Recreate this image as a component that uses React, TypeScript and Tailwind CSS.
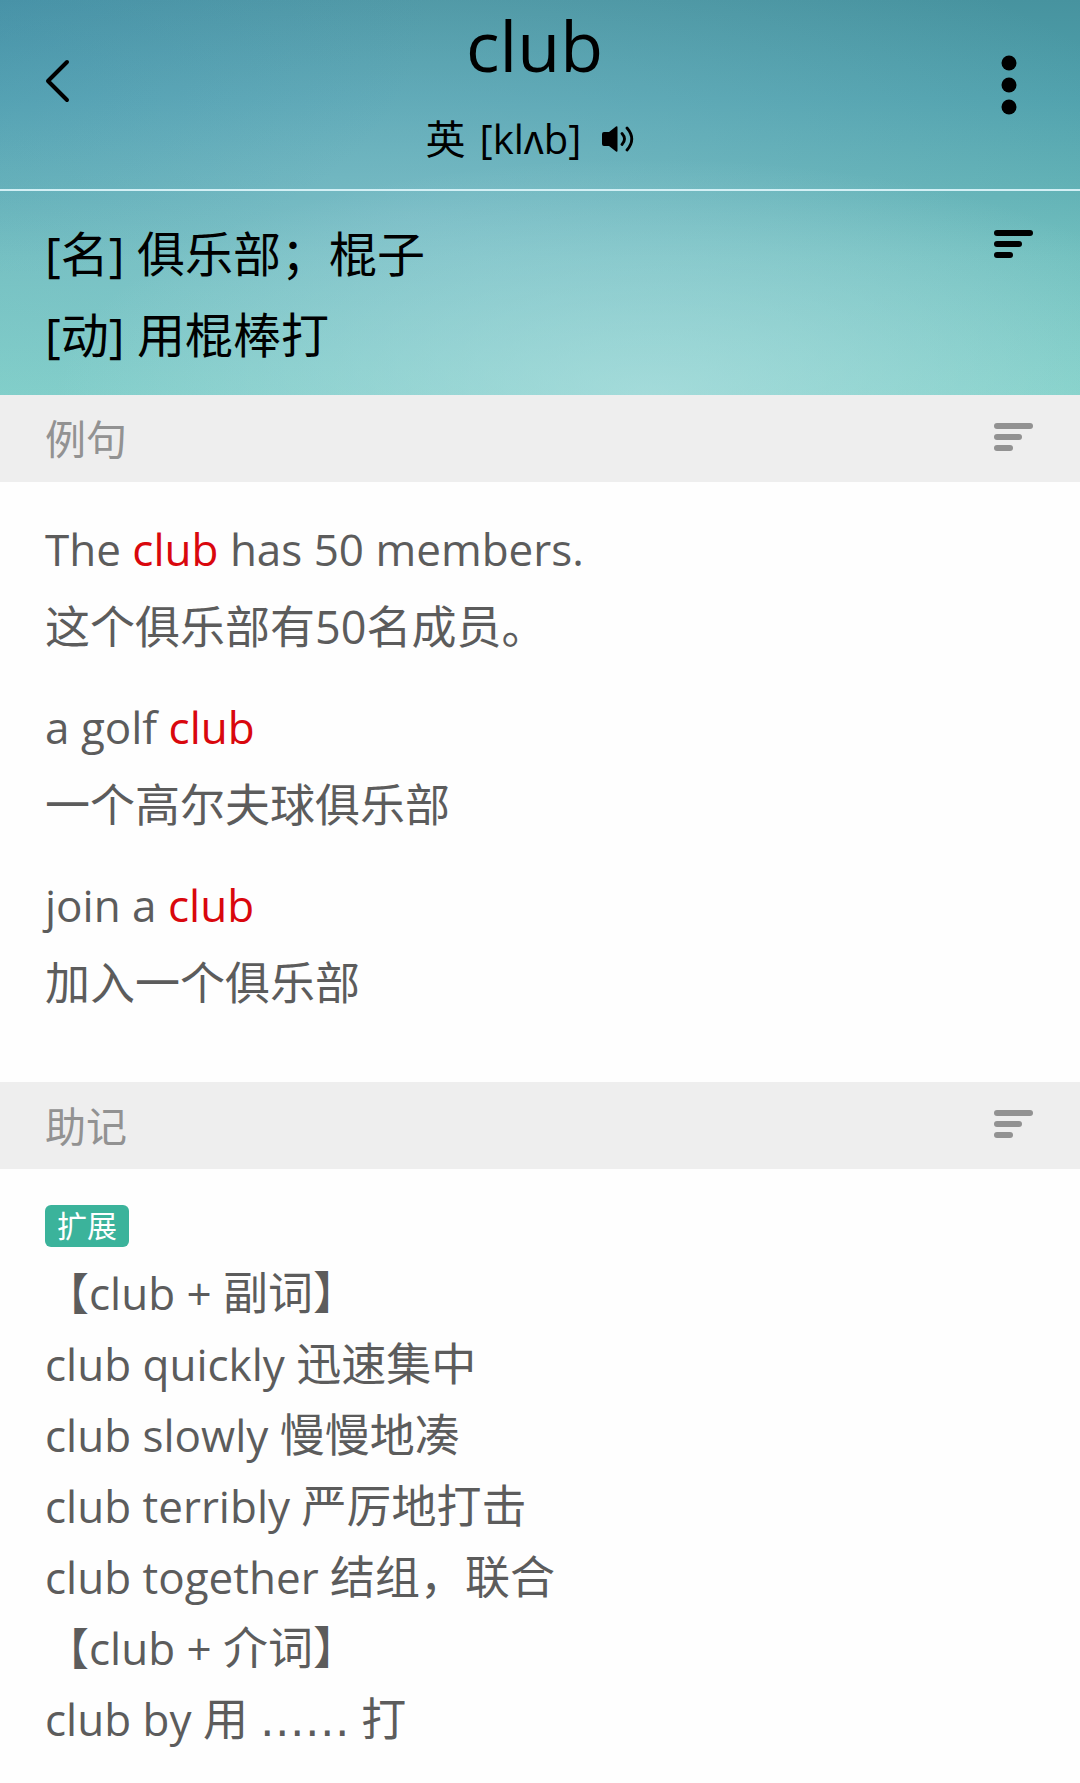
import { clsx } from "clsx";

interface Example {
  before: string;
  word: string;
  after: string;
  translation: string;
}

interface Note {
  phrase: string;
  meaning: string;
  // Placeholder dots come between the meaning and this part
  rest?: string;
}

const definitions = ["[名] 俱乐部；棍子", "[动] 用棍棒打"];

const examples: Example[] = [
  { before: "The ", word: "club", after: " has 50 members.", translation: "这个俱乐部有50名成员。" },
  { before: "a golf ", word: "club", after: "", translation: "一个高尔夫球俱乐部" },
  { before: "join a ", word: "club", after: "", translation: "加入一个俱乐部" },
];

const notes: Note[] = [
  { phrase: "【club + ", meaning: "副词】" },
  { phrase: "club quickly ", meaning: "迅速集中" },
  { phrase: "club slowly ", meaning: "慢慢地凑" },
  { phrase: "club terribly ", meaning: "严厉地打击" },
  { phrase: "club together ", meaning: "结组，联合" },
  { phrase: "【club + ", meaning: "介词】" },
  { phrase: "club by ", meaning: "用 ", rest: " 打" },
];

function MenuButton({ label, className }: { label: string; className?: string }) {
  return (
    <button aria-label={label} className={clsx("shrink-0", className)}>
      <svg width="40" height="30" viewBox="0 0 40 30" fill="currentColor">
        <rect x="0" y="1" width="39" height="6" rx="3" />
        <rect x="0" y="12" width="28" height="6" rx="3" />
        <rect x="0" y="23" width="19" height="6" rx="3" />
      </svg>
    </button>
  );
}

function SectionHeader({ title }: { title: string }) {
  return (
    <div className="flex h-[87px] items-center justify-between bg-[#eeeeee] pl-[45px] pr-[46px] text-[#929292]">
      <h2 className="text-[41px] leading-[60px]">{title}</h2>
      <MenuButton label={title} className="pb-1" />
    </div>
  );
}

export default function App() {
  return (
    <div className="min-h-screen bg-[#fefefe] font-['Open_Sans','Noto_Sans_CJK_SC',sans-serif] text-[#5c5c5c]">
      <div className="bg-[radial-gradient(ellipse_55%_60%_at_60%_100%,rgba(185,228,228,0.6),rgba(185,228,228,0)),radial-gradient(ellipse_40%_70%_at_0%_0%,rgba(60,135,180,0.25),rgba(60,135,180,0)),radial-gradient(ellipse_75%_80%_at_38%_55%,rgba(145,195,215,0.45),rgba(145,195,215,0)),linear-gradient(to_bottom,#47939f,#4fa1ac_25%,#5eb0b3_47%,#6fc0bd_65%,#80d0c8)] text-black">
        <header className="flex h-[191px] justify-between border-b-2 border-[#d3f0f5] pl-[45px] pr-[46px]">
          <button aria-label="返回" className="mt-[58px] flex h-[46px] w-[48px]">
            <svg width="26" height="46" viewBox="0 0 26 46" fill="none" stroke="currentColor" strokeWidth="4" strokeLinecap="round" strokeLinejoin="round">
              <path d="M22 4 3 23 22 42" />
            </svg>
          </button>

          <div className="flex flex-col items-center">
            <h1 className="text-[70px] leading-[90px]">club</h1>
            <div className="flex items-center text-[40px] leading-[98px]">
              <span>英</span>
              <span className="pl-[14px]">[klʌb]</span>
              <button aria-label="发音" className="pl-5 pr-2">
                <svg width="34" height="28" viewBox="0 0 34 28">
                  <path d="M3 7h5L15 1.5q1.500-1 1.500 1v23q0 2-1.500 1L8 21H3q-2 0-2-2V9q0-2 2-2z" fill="currentColor" />
                  <path d="M21 8.500q5 5.500 0 11M26 3q9.500 11 0 22" fill="none" stroke="currentColor" strokeWidth="2.800" strokeLinecap="round" />
                </svg>
              </button>
            </div>
          </div>

          <button aria-label="更多" className="mt-[54px] flex h-[62px] w-[58px] justify-center pl-2">
            <svg width="16" height="62" viewBox="0 0 16 62" fill="currentColor">
              <circle cx="8" cy="9" r="7.500" />
              <circle cx="8" cy="31" r="7.500" />
              <circle cx="8" cy="53" r="7.500" />
            </svg>
          </button>
        </header>

        <section className="flex items-start justify-between pb-5 pl-[45px] pr-[46px] pt-[22px]">
          <div className="text-[48px] leading-[81px]">
            {definitions.map((item) => (
              <p key={item}>{item}</p>
            ))}
          </div>
          <MenuButton label="释义" className="mt-4" />
        </section>
      </div>

      <SectionHeader title="例句" />
      <section className="flex flex-col gap-[22px] px-[45px] pb-[60px] pt-7 text-[45px] leading-[78px]">
        {examples.map((item) => (
          <div key={item.translation}>
            <p className="text-[44px]/[78px]">
              {item.before}
              <span className="text-[#d9070d]">{item.word}</span>
              {item.after}
            </p>
            <p>{item.translation}</p>
          </div>
        ))}
      </section>

      <SectionHeader title="助记" />
      <section className="px-[45px] pt-9">
        <span className="flex h-[42px] w-fit items-center rounded-md bg-[#3bb39b] px-3 text-[30px] leading-[42px] text-white">扩展</span>
        <div className="pt-[10px] text-[45px] leading-[71px]">
          {notes.map((note) => (
            <p key={note.phrase + note.meaning} className="h-[71px]">
              <span className="text-[44px]/[71px]">{note.phrase}</span>
              {note.meaning}
              {note.rest && (
                <>
                  <span className="font-['DejaVu_Sans',sans-serif]">……</span>
                  {note.rest}
                </>
              )}
            </p>
          ))}
        </div>
      </section>
    </div>
  );
}
